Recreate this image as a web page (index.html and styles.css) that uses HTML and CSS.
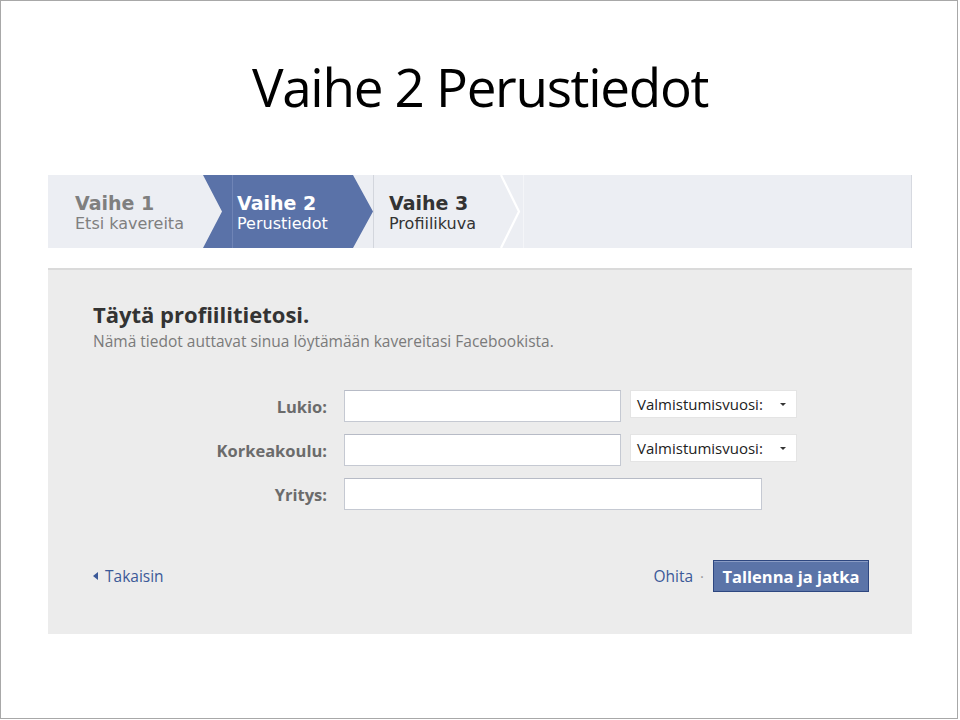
FILE: index.html
```html
<!DOCTYPE html>
<html lang="fi">
<head>
<meta charset="utf-8">
<title>Vaihe 2 Perustiedot</title>
<link rel="stylesheet" href="styles.css">
</head>
<body>
<div class="slide">
  <h1 class="title">Vaihe 2 Perustiedot</h1>

  <div class="stepper">
    <div class="step step-done">
      <span class="step-num">Vaihe 1</span>
      <span class="step-name">Etsi kavereita</span>
    </div>
    <div class="step step-active">
      <span class="step-num">Vaihe 2</span>
      <span class="step-name">Perustiedot</span>
    </div>
    <div class="step step-next">
      <div class="step-text">
        <span class="step-num">Vaihe 3</span>
        <span class="step-name">Profiilikuva</span>
      </div>
      <svg class="chev" width="22" height="73" viewBox="0 0 22 73"><polyline points="1,0 19,36.5 1,73" fill="none" stroke="#ffffff" stroke-width="2.2"/></svg>
    </div>
    <div class="step-fill"></div>
  </div>

  <div class="panel">
    <h2 class="heading">Täytä profiilitietosi.</h2>
    <p class="sub">Nämä tiedot auttavat sinua löytämään kavereitasi Facebookista.</p>

    <div class="form">
      <div class="row">
        <label class="label">Lukio:</label>
        <div class="input"></div>
        <div class="select"><span>Valmistumisvuosi:</span><i class="caret"></i></div>
      </div>
      <div class="row">
        <label class="label">Korkeakoulu:</label>
        <div class="input"></div>
        <div class="select"><span>Valmistumisvuosi:</span><i class="caret"></i></div>
      </div>
      <div class="row">
        <label class="label">Yritys:</label>
        <div class="input input-wide"></div>
      </div>
    </div>

    <div class="actions">
      <a class="back"><i class="back-arrow"></i>Takaisin</a>
      <div class="actions-right">
        <a class="skip">Ohita</a>
        <span class="dot">·</span>
        <button class="btn">Tallenna ja jatka</button>
      </div>
    </div>
  </div>
</div>
</body>
</html>
```

FILE: styles.css
```css
html, body {
  margin: 0;
  padding: 0;
  background: #ffffff;
}

.slide {
  width: 958px;
  height: 719px;
  box-sizing: border-box;
  border: 1px solid #a8a8a8;
  padding-top: 50px;
  background: #ffffff;
}

.title {
  margin: 0;
  font-family: "Open Sans", sans-serif;
  font-weight: 400;
  font-size: 53px;
  line-height: 72px;
  letter-spacing: -1.3px;
  color: #000000;
  text-align: center;
  padding-left: 2px;
}

/* ---------- stepper ---------- */
.stepper {
  display: flex;
  width: 864px;
  height: 73px;
  margin: 52px 0 0 47px;
  background: #eceef3;
  border-right: 1px solid #d6d9e0;
  box-sizing: border-box;
  font-family: "DejaVu Sans", Verdana, sans-serif;
}

.step {
  display: flex;
  flex-direction: column;
  box-sizing: border-box;
  padding-top: 17px;
}

.step-num {
  font-weight: 700;
  font-size: 19px;
  line-height: 22px;
}

.step-name {
  font-size: 16px;
  line-height: 20px;
}

.step-done {
  width: 155px;
  padding-left: 27px;
  color: #7f7f7f;
}

.step-active {
  width: 170px;
  padding-left: 34px;
  color: #ffffff;
  background: linear-gradient(to right, #5a72a8 0, #5a72a8 29px, #6f84b6 29px, #6f84b6 30px, #5a72a8 30px);
  clip-path: polygon(0 0, 150px 0, 170px 50%, 150px 100%, 0 100%, 19px 50%);
}

.step-next {
  width: 150px;
  flex-direction: row;
  padding-top: 0;
  padding-left: 15px;
  border-left: 1px solid #d3d6dd;
  color: #333333;
}

.step-text {
  display: flex;
  flex-direction: column;
  padding-top: 17px;
}

.chev {
  margin-left: auto;
  margin-right: 1px;
  display: block;
}

.step-fill {
  flex: 1;
  border-left: 1px solid #f4f5f8;
}

/* ---------- panel ---------- */
.panel {
  width: 864px;
  height: 366px;
  box-sizing: border-box;
  margin: 20px 0 0 47px;
  background: #ececec;
  border-top: 2px solid #dadada;
  padding: 29px 43px 0 45px;
  font-family: "Open Sans", Tahoma, sans-serif;
}

.heading {
  margin: 0;
  font-size: 22px;
  line-height: 30px;
  font-weight: 700;
  color: #333333;
}

.sub {
  margin: 2px 0 0;
  font-size: 15.5px;
  line-height: 20px;
  color: #7a7a7a;
}

.form {
  margin-top: 39px;
  display: flex;
  flex-direction: column;
  gap: 12px;
}

.row {
  display: flex;
  align-items: center;
  height: 32px;
}

.label {
  width: 234px;
  text-align: right;
  font-weight: 700;
  font-size: 16.5px;
  color: #6b6b6b;
  margin-right: 17px;
}

.input {
  width: 277px;
  height: 32px;
  box-sizing: border-box;
  background: #ffffff;
  border: 1px solid #c5c9d2;
  border-top-color: #b7bbc6;
}

.input-wide {
  width: 418px;
}

.select {
  align-self: flex-start;
  margin-left: 9px;
  width: 167px;
  height: 28px;
  box-sizing: border-box;
  background: #ffffff;
  border: 1px solid #e4e4e4;
  display: flex;
  align-items: center;
  padding: 0 10px 0 6px;
  font-size: 15px;
  color: #222222;
}

.caret {
  margin-left: auto;
  width: 0;
  height: 0;
  border-left: 3px solid transparent;
  border-right: 3px solid transparent;
  border-top: 3px solid #333333;
}

/* ---------- actions ---------- */
.actions {
  margin-top: 50px;
  display: flex;
  align-items: center;
  justify-content: space-between;
  height: 32px;
}

.back {
  display: flex;
  align-items: center;
  font-size: 15.5px;
  color: #3b5998;
}

.back-arrow {
  width: 0;
  height: 0;
  border-top: 4px solid transparent;
  border-bottom: 4px solid transparent;
  border-right: 5px solid #3b5998;
  margin-right: 7px;
}

.actions-right {
  display: flex;
  align-items: center;
}

.skip {
  font-size: 15.5px;
  color: #3b5998;
}

.dot {
  color: #999999;
  font-size: 15px;
  margin: 0 9px 0 7px;
}

.btn {
  width: 156px;
  height: 32px;
  box-sizing: border-box;
  background: #5b74a8;
  border: 1px solid #2e4780;
  box-shadow: inset 0 1px 0 #8a9cc4;
  color: #ffffff;
  font-family: "Open Sans", Tahoma, sans-serif;
  font-weight: 700;
  font-size: 16.5px;
  padding: 0;
  margin: 0;
}
```
